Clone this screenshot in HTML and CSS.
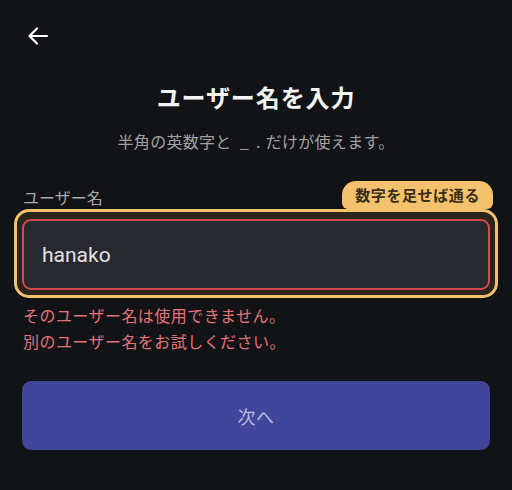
FILE: index.html
```html
<!DOCTYPE html>
<html lang="ja">
<head>
<meta charset="utf-8">
<link rel="stylesheet" href="styles.css">
</head>
<body>
<div class="screen">
  <header class="top">
    <button class="back" aria-label="戻る">
      <svg width="24" height="24" viewBox="0 0 24 24" fill="none" stroke="#ffffff" stroke-width="2.2" stroke-linecap="round" stroke-linejoin="round">
        <path d="M21 12H4"/>
        <path d="M11 4.5L3.5 12L11 19.5"/>
      </svg>
    </button>
  </header>
  <main class="content">
    <h1 class="title">ユーザー名を入力</h1>
    <p class="subtitle">半角の英数字と<span class="us">_</span><span class="dot">.</span>だけが使えます。</p>
    <div class="label-row">
      <span class="label">ユーザー名</span>
      <span class="badge">数字を足せば通る</span>
    </div>
    <div class="ring">
      <div class="input">hanako</div>
    </div>
    <div class="errors">
      <p>そのユーザー名は使用できません。</p>
      <p>別のユーザー名をお試しください。</p>
    </div>
    <button class="next">次へ</button>
  </main>
</div>
</body>
</html>
```
FILE: styles.css
```css
* { box-sizing: border-box; }
html, body {
  margin: 0;
  padding: 0;
  background: #121316;
}
body {
  font-family: "Noto Sans CJK JP", "Noto Sans", sans-serif;
  color: #ffffff;
}
.screen {
  width: 512px;
  height: 490px;
  overflow: hidden;
}
.top {
  height: 72px;
  padding: 24px 0 0 26px;
}
.back {
  display: block;
  width: 24px;
  height: 24px;
  padding: 0;
  border: 0;
  background: none;
}
.back svg { display: block; }
.content {
  padding: 0 22px;
  display: flex;
  flex-direction: column;
}
.title {
  margin: 9px 0 0;
  font-size: 24px;
  line-height: 32px;
  font-weight: 700;
  letter-spacing: 0.9px;
  text-align: center;
  color: #f4f4f4;
}
.subtitle {
  margin: 16px 0 0;
  font-size: 16px;
  line-height: 24px;
  letter-spacing: 0.3px;
  text-align: center;
  color: #a2a2a4;
}
.us {
  margin-left: 8px;
}
.dot {
  margin-left: 7px;
  margin-right: 5px;
}
.label-row {
  margin-top: 28px;
  height: 28px;
  display: flex;
  justify-content: space-between;
  align-items: flex-end;
  margin-right: -3px;
}
.label {
  font-size: 16px;
  line-height: 22px;
  color: #a8a8aa;
  padding-left: 1px;
  margin-bottom: 1px;
}
.badge {
  height: 28px;
  padding: 0 13px;
  border-radius: 14px 14px 6px 6px;
  background: #f4c26c;
  color: #3a2d1a;
  font-weight: 700;
  font-size: 15px;
  letter-spacing: 0.6px;
  line-height: 28px;
}
.ring {
  margin: 0 -8px;
  border: 3px solid #f2c26d;
  border-radius: 15px;
  background: #2a251c;
  padding: 7px 5px 5px;
}
.input {
  height: 71px;
  border: 2px solid #d8464f;
  border-radius: 9px;
  background: #27292e;
  padding-left: 18px;
  display: flex;
  align-items: center;
  font-family: Roboto, "Noto Sans", sans-serif;
  font-size: 21px;
  color: #e2e2e4;
}
.errors {
  margin-top: 4px;
}
.errors p {
  margin: 0;
  padding-left: 1px;
  font-size: 16px;
  line-height: 26px;
  letter-spacing: 0.45px;
  color: #e2737a;
}
.next {
  margin-top: 27px;
  height: 69px;
  width: 100%;
  border: 0;
  border-radius: 9px;
  background: #41469b;
  color: #b8bae6;
  font-family: "Noto Sans CJK JP", "Noto Sans", sans-serif;
  font-size: 18px;
  letter-spacing: 0.5px;
}
```
